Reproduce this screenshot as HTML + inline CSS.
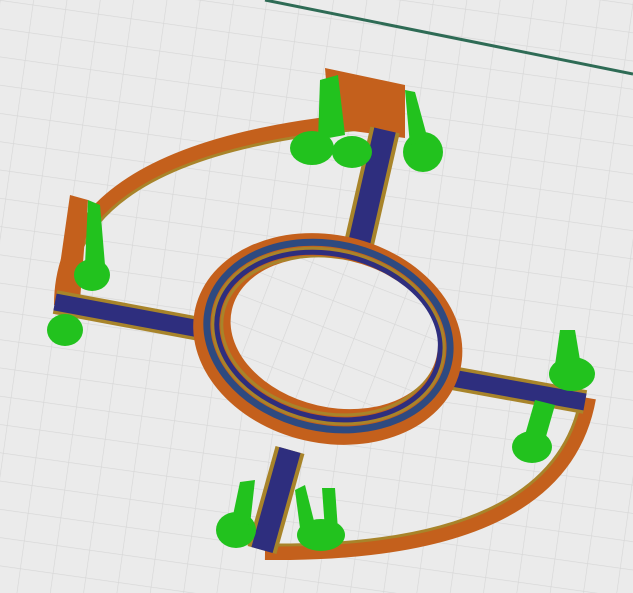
<!DOCTYPE html>
<html><head><meta charset="utf-8"><style>
html,body{margin:0;padding:0;width:633px;height:593px;overflow:hidden;background:#ebebeb}
</style></head><body>
<svg width="633" height="593" viewBox="0 0 633 593" xmlns="http://www.w3.org/2000/svg">
<defs>
<pattern id="g" width="33" height="28" patternUnits="userSpaceOnUse" patternTransform="rotate(8)">
<rect width="33" height="28" fill="#ebebeb"/>
<path d="M0 0H33M0 0V28" stroke="#d6d6d6" stroke-width="1.2" fill="none"/>
</pattern>
</defs>
<rect width="633" height="593" fill="url(#g)"/>
<line x1="265" y1="0" x2="633" y2="74" stroke="#2e6b55" stroke-width="3"/>

<path d="M62 305 Q62 140 400 118" stroke="#c4601c" stroke-width="16" fill="none"/>
<path d="M69 305 Q69 147 400 126" stroke="#a8842a" stroke-width="3" fill="none"/>
<path d="M588 398 Q560 555 265 552" stroke="#c4601c" stroke-width="16" fill="none"/>
<path d="M581 398 Q553 548 265 545" stroke="#a8842a" stroke-width="3" fill="none"/>
<path d="M55 300 L70 195 L88 200 L80 300Z" fill="#c4601c"/>
<path d="M325 68 L405 85 L405 138 L330 128Z" fill="#c4601c"/>

<g stroke-linecap="butt" fill="none">
<line x1="385" y1="130" x2="358" y2="248" stroke="#a8842a" stroke-width="30"/>
<line x1="385" y1="130" x2="358" y2="248" stroke="#2e2e7e" stroke-width="22"/>
<line x1="55" y1="302" x2="205" y2="330" stroke="#a8842a" stroke-width="24"/>
<line x1="55" y1="302" x2="205" y2="330" stroke="#2e2e7e" stroke-width="17"/>
<line x1="452" y1="378" x2="585" y2="402" stroke="#a8842a" stroke-width="24"/>
<line x1="452" y1="378" x2="585" y2="402" stroke="#2e2e7e" stroke-width="17"/>
<line x1="290" y1="450" x2="262" y2="550" stroke="#a8842a" stroke-width="30"/>
<line x1="290" y1="450" x2="262" y2="550" stroke="#2e2e7e" stroke-width="22"/>
</g>

<g transform="rotate(13 328 338)">
<ellipse cx="328" cy="339" rx="136" ry="104" fill="#c4601c"/>
<ellipse cx="328" cy="336" rx="123" ry="92" fill="none" stroke="#2e4a80" stroke-width="7"/>
<ellipse cx="328" cy="336" rx="117" ry="86" fill="none" stroke="#a8842a" stroke-width="3"/>
<ellipse cx="328" cy="336" rx="113" ry="82" fill="none" stroke="#2e2e7e" stroke-width="5"/>
<ellipse cx="328" cy="336" rx="108" ry="77" fill="none" stroke="#a8842a" stroke-width="3"/>
<ellipse cx="333" cy="332" rx="105" ry="74" fill="url(#g)"/>
</g>

<g fill="#22c21e">
<ellipse cx="312" cy="148" rx="22" ry="17"/>
<ellipse cx="352" cy="152" rx="20" ry="16"/>
<ellipse cx="423" cy="152" rx="20" ry="20"/>
<path d="M320 80 L338 75 L345 135 L318 140Z"/>
<path d="M405 90 L415 92 L428 140 L410 145Z"/>
<ellipse cx="92" cy="275" rx="18" ry="16"/>
<path d="M88 200 L100 205 L105 265 L85 265Z"/>
<ellipse cx="65" cy="330" rx="18" ry="16"/>
<ellipse cx="572" cy="374" rx="23" ry="17"/>
<path d="M560 330 L575 330 L580 360 L555 365Z"/>
<ellipse cx="532" cy="447" rx="20" ry="16"/>
<path d="M535 400 L555 405 L545 440 L525 435Z"/>
<ellipse cx="236" cy="530" rx="20" ry="18"/>
<path d="M240 482 L255 480 L250 525 L232 520Z"/>
<ellipse cx="321" cy="535" rx="24" ry="16"/>
<path d="M295 490 L305 485 L315 525 L300 528Z"/>
<path d="M322 488 L335 488 L338 530 L325 530Z"/>
</g>
</svg>
</body></html>
